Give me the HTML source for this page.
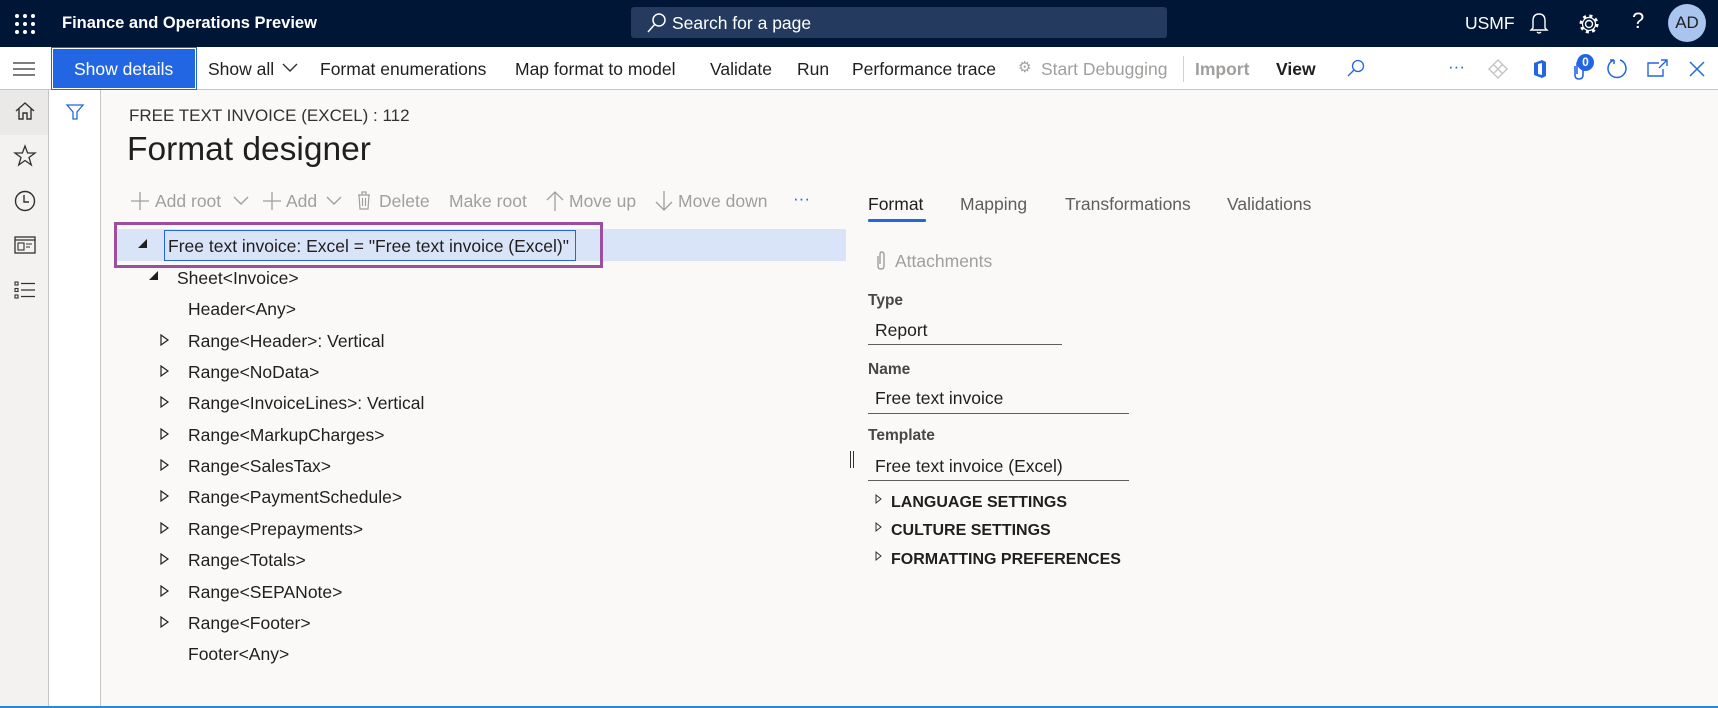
<!DOCTYPE html>
<html><head><meta charset="utf-8"><style>
*{margin:0;padding:0;box-sizing:border-box}
body{width:1718px;height:708px;overflow:hidden;background:#faf9f8;font-family:"Liberation Sans",sans-serif;color:#201f1e;position:relative}
.a{position:absolute;white-space:nowrap;line-height:22px}
svg{position:absolute;overflow:visible}
.g{color:#a19f9d}
.f{font-size:17.5px}
</style></head><body>
<div style="position:absolute;left:0;top:0;width:1718px;height:47px;background:#001636"></div>
<svg style="left:14px;top:13px" width="22" height="22"><g fill="#fff"><circle cx="3" cy="3" r="2"/><circle cx="11" cy="3" r="2"/><circle cx="19" cy="3" r="2"/><circle cx="3" cy="11" r="2"/><circle cx="11" cy="11" r="2"/><circle cx="19" cy="11" r="2"/><circle cx="3" cy="19" r="2"/><circle cx="11" cy="19" r="2"/><circle cx="19" cy="19" r="2"/></g></svg>
<div class="a" style="left:62px;top:12px;color:#fff;font-weight:bold;font-size:16.5px">Finance and Operations Preview</div>
<div style="position:absolute;left:631px;top:7px;width:536px;height:31px;background:#243a5e;border-radius:3px"></div>
<svg style="left:647px;top:13px" width="20" height="20"><circle cx="12" cy="7" r="6" fill="none" stroke="#fff" stroke-width="1.5"/><path d="M8 11 L1 19" stroke="#fff" stroke-width="1.5"/></svg>
<div class="a" style="left:672px;top:12px;color:#fff;font-size:17.5px">Search for a page</div>
<div class="a" style="left:1465px;top:12px;color:#fff;font-size:17.5px">USMF</div>
<svg style="left:1530px;top:13px" width="20" height="22"><path d="M3 15 L3 8 Q3 1 9 1 Q15 1 15 8 L15 15 L17 17 L1 17 Z M7 19 Q9 21 11 19" fill="none" stroke="#fff" stroke-width="1.4"/></svg>
<svg style="left:1577px;top:12px" width="24" height="24"><circle cx="12" cy="12" r="3.5" fill="none" stroke="#fff" stroke-width="1.4"/><circle cx="12" cy="12" r="8" fill="none" stroke="#fff" stroke-width="3" stroke-dasharray="3 3.3"/><circle cx="12" cy="12" r="6.5" fill="none" stroke="#fff" stroke-width="1.2"/></svg>
<div class="a" style="left:1632px;top:10px;color:#fff;font-size:22px">?</div>
<div style="position:absolute;left:1668px;top:4px;width:38px;height:38px;border-radius:50%;background:#a9c4ee;color:#201f1e;font-size:17px;text-align:center;line-height:38px">AD</div>
<div style="position:absolute;left:0;top:47px;width:1718px;height:43px;background:#fff;border-bottom:1px solid #c8c6c4"></div>
<svg style="left:13px;top:62px" width="22" height="14"><path d="M0 1H22M0 7H22M0 13H22" stroke="#323130" stroke-width="1.3"/></svg>
<div style="position:absolute;left:52px;top:48px;width:144px;height:41px;background:#2266e3;border:1px solid #fff;outline:1px solid #2266e3"></div>
<div class="a f" style="left:74px;top:58px;color:#fff">Show details</div>
<div class="a f" style="left:208px;top:58px">Show all</div>
<svg style="left:282px;top:63px" width="16" height="10"><path d="M1 1L8 8L15 1" fill="none" stroke="#323130" stroke-width="1.4"/></svg>
<div class="a f" style="left:320px;top:58px">Format enumerations</div>
<div class="a f" style="left:515px;top:58px">Map format to model</div>
<div class="a f" style="left:710px;top:58px">Validate</div>
<div class="a f" style="left:797px;top:58px">Run</div>
<div class="a f" style="left:852px;top:58px">Performance trace</div>
<div class="a g" style="left:1018px;top:57px;font-size:15px">⚙</div>
<div class="a g f" style="left:1041px;top:58px">Start Debugging</div>
<div style="position:absolute;left:1183px;top:56px;width:1px;height:26px;background:#d2d0ce"></div>
<div class="a g f" style="left:1195px;top:58px;font-weight:bold">Import</div>
<div class="a f" style="left:1276px;top:58px;font-weight:bold">View</div>
<svg style="left:1347px;top:59px" width="18" height="18"><circle cx="11" cy="7" r="5.5" fill="none" stroke="#2266e3" stroke-width="1.3"/><path d="M7 11L1 17" stroke="#2266e3" stroke-width="1.3"/></svg>
<div class="a" style="left:1448px;top:56px;font-size:17px;color:#2266e3">···</div>
<svg style="left:1488px;top:59px" width="20" height="20"><path d="M10 1L19 10L10 19L1 10Z M5.5 5.5L14.5 14.5M14.5 5.5L5.5 14.5" fill="none" stroke="#c8c6c4" stroke-width="1.5"/></svg>
<svg style="left:1532px;top:59px" width="16" height="20"><path d="M2 4L10 1L14 3L14 17L10 19L2 16Z" fill="#2266e3"/><path d="M6 5L10 4L10 16L6 15Z" fill="#fff"/></svg>
<svg style="left:1572px;top:60px" width="14" height="20"><path d="M3 6 L3 15 Q3 19 7 19 Q11 19 11 15 L11 4 Q11 1 8 1 Q5 1 5 4 L5 14" fill="none" stroke="#2266e3" stroke-width="1.6"/></svg>
<div style="position:absolute;left:1577px;top:54px;width:17px;height:17px;border-radius:50%;background:#2266e3;color:#fff;font-size:12px;text-align:center;line-height:17px;font-weight:bold">0</div>
<svg style="left:1607px;top:58px" width="22" height="22"><path d="M7 2 A9 9 0 1 0 13 2" fill="none" stroke="#2266e3" stroke-width="1.5"/><path d="M7 2L3 2M7 2L7 6" stroke="#2266e3" stroke-width="1.5"/></svg>
<svg style="left:1647px;top:59px" width="22" height="18"><path d="M12 4H1V17H16V10M14 1H20V7M20 1L12 9" fill="none" stroke="#2266e3" stroke-width="1.4"/></svg>
<svg style="left:1689px;top:61px" width="16" height="16"><path d="M1 1L15 15M15 1L1 15" stroke="#2266e3" stroke-width="1.5"/></svg>
<div style="position:absolute;left:0;top:90px;width:49px;height:618px;background:#f3f2f1;border-right:1px solid #c8c6c4"></div>
<div style="position:absolute;left:0;top:90px;width:48px;height:45px;background:#eae9e8"></div>
<svg style="left:15px;top:101px" width="20" height="20"><path d="M1 10L10 2L19 10M4 8V18H8V12H12V18H16V8" fill="none" stroke="#323130" stroke-width="1.4"/></svg>
<svg style="left:14px;top:145px" width="22" height="22"><path d="M11 1L13.6 8H21L15 12.5L17.3 20L11 15.5L4.7 20L7 12.5L1 8H8.4Z" fill="none" stroke="#323130" stroke-width="1.3"/></svg>
<svg style="left:14px;top:190px" width="22" height="22"><circle cx="11" cy="11" r="9.5" fill="none" stroke="#323130" stroke-width="1.4"/><path d="M10 5V12H15" fill="none" stroke="#323130" stroke-width="1.4"/></svg>
<svg style="left:14px;top:236px" width="22" height="18"><rect x="1" y="1" width="20" height="16" fill="none" stroke="#323130" stroke-width="1.3"/><path d="M1 4H21" stroke="#323130" stroke-width="1.3"/><rect x="4" y="7" width="6" height="7" fill="none" stroke="#323130" stroke-width="1.1"/><path d="M12 8H18M12 11H16" stroke="#323130"/></svg>
<svg style="left:14px;top:281px" width="22" height="18"><g fill="none" stroke="#323130" stroke-width="1.1"><rect x="1" y="1" width="3" height="3"/><rect x="1" y="7.5" width="3" height="3"/><rect x="1" y="14" width="3" height="3"/></g><path d="M7 2.5H21M7 9H21M7 15.5H21" stroke="#323130" stroke-width="1.2"/></svg>
<div style="position:absolute;left:49px;top:90px;width:52px;height:618px;background:#fff;border-right:1px solid #c8c6c4"></div>
<svg style="left:66px;top:104px" width="18" height="16"><path d="M1 1H17L11 8V15H7V8Z" fill="none" stroke="#2266e3" stroke-width="1.3"/></svg>
<div style="position:absolute;left:0;top:706px;width:1718px;height:2px;background:#2b88d8"></div>
<div class="a" style="left:129px;top:105px;font-size:17px;color:#323130">FREE TEXT INVOICE (EXCEL) : 112</div>
<div class="a" style="left:127px;top:130px;font-size:33.5px;line-height:40px">Format designer</div>
<svg style="left:131px;top:192px" width="18" height="18"><path d="M9 0V18M0 9H18" stroke="#a19f9d" stroke-width="1.3"/></svg>
<div class="a g f" style="left:155px;top:190px">Add root</div>
<svg style="left:233px;top:196px" width="16" height="10"><path d="M1 1L8 8L15 1" fill="none" stroke="#a19f9d" stroke-width="1.4"/></svg>
<svg style="left:263px;top:192px" width="18" height="18"><path d="M9 0V18M0 9H18" stroke="#a19f9d" stroke-width="1.3"/></svg>
<div class="a g f" style="left:286px;top:190px">Add</div>
<svg style="left:326px;top:196px" width="16" height="10"><path d="M1 1L8 8L15 1" fill="none" stroke="#a19f9d" stroke-width="1.4"/></svg>
<svg style="left:357px;top:191px" width="14" height="19"><path d="M1 4H13M5 4V1H9V4M2 4L3 18H11L12 4M5.5 7V15M8.5 7V15" fill="none" stroke="#a19f9d" stroke-width="1.2"/></svg>
<div class="a g f" style="left:379px;top:190px">Delete</div>
<div class="a g f" style="left:449px;top:190px">Make root</div>
<svg style="left:546px;top:191px" width="18" height="20"><path d="M9 20V1M1 9L9 1L17 9" fill="none" stroke="#a19f9d" stroke-width="1.3"/></svg>
<div class="a g f" style="left:569px;top:190px">Move up</div>
<svg style="left:655px;top:191px" width="18" height="20"><path d="M9 0V19M1 11L9 19L17 11" fill="none" stroke="#a19f9d" stroke-width="1.3"/></svg>
<div class="a g f" style="left:678px;top:190px">Move down</div>
<div class="a" style="left:793px;top:188px;font-size:17px;color:#2266e3">···</div>
<div style="position:absolute;left:117px;top:229px;width:729px;height:32px;background:#dae4f8"></div>
<div style="position:absolute;left:114px;top:222px;width:489px;height:46px;border:3px solid #9b4f9e"></div>
<div style="position:absolute;left:164px;top:230px;width:412px;height:31px;border:1px solid #2266e3"></div>
<svg style="left:138px;top:239px" width="10" height="10"><path d="M9 0V9H0Z" fill="#201f1e"/></svg>
<div class="a f" style="left:168px;top:235px">Free text invoice: Excel = "Free text invoice (Excel)"</div>
<svg style="left:149px;top:271px" width="10" height="10"><path d="M9 0V9H0Z" fill="#201f1e"/></svg>
<div class="a f" style="left:177px;top:267px">Sheet&lt;Invoice&gt;</div>
<div class="a f" style="left:188px;top:298px">Header&lt;Any&gt;</div>
<div class="a f" style="left:188px;top:330px">Range&lt;Header&gt;: Vertical</div>
<div class="a f" style="left:188px;top:361px">Range&lt;NoData&gt;</div>
<div class="a f" style="left:188px;top:392px">Range&lt;InvoiceLines&gt;: Vertical</div>
<div class="a f" style="left:188px;top:424px">Range&lt;MarkupCharges&gt;</div>
<div class="a f" style="left:188px;top:455px">Range&lt;SalesTax&gt;</div>
<div class="a f" style="left:188px;top:486px">Range&lt;PaymentSchedule&gt;</div>
<div class="a f" style="left:188px;top:518px">Range&lt;Prepayments&gt;</div>
<div class="a f" style="left:188px;top:549px">Range&lt;Totals&gt;</div>
<div class="a f" style="left:188px;top:581px">Range&lt;SEPANote&gt;</div>
<div class="a f" style="left:188px;top:612px">Range&lt;Footer&gt;</div>
<div class="a f" style="left:188px;top:643px">Footer&lt;Any&gt;</div>
<svg style="left:160px;top:334px" width="10" height="300"><g fill="none" stroke="#201f1e" stroke-width="1.2"><path d="M1 1L8 6L1 11Z"/><path d="M1 32L8 37L1 42Z"/><path d="M1 63L8 68L1 73Z"/><path d="M1 95L8 100L1 105Z"/><path d="M1 126L8 131L1 136Z"/><path d="M1 157L8 162L1 167Z"/><path d="M1 189L8 194L1 199Z"/><path d="M1 220L8 225L1 230Z"/><path d="M1 252L8 257L1 262Z"/><path d="M1 283L8 288L1 293Z"/></g></svg>
<div class="a f" style="left:868px;top:193px">Format</div>
<div style="position:absolute;left:868px;top:219px;width:58px;height:3px;background:#2266e3;border-radius:1px"></div>
<div class="a f" style="left:960px;top:193px;color:#605e5c">Mapping</div>
<div class="a f" style="left:1065px;top:193px;color:#605e5c">Transformations</div>
<div class="a f" style="left:1227px;top:193px;color:#605e5c">Validations</div>
<svg style="left:876px;top:251px" width="10" height="20"><path d="M2 5V15Q2 18 5 18Q8 18 8 15V4Q8 1 5.5 1Q4 1 4 4V13" fill="none" stroke="#a19f9d" stroke-width="1.4"/></svg>
<div class="a g f" style="left:895px;top:250px">Attachments</div>
<div class="a" style="left:868px;top:290px;font-size:15.5px;font-weight:bold;color:#494746">Type</div>
<div class="a f" style="left:875px;top:319px">Report</div>
<div style="position:absolute;left:868px;top:344px;width:194px;height:1px;background:#605e5c"></div>
<div class="a" style="left:868px;top:359px;font-size:15.5px;font-weight:bold;color:#494746">Name</div>
<div class="a f" style="left:875px;top:387px">Free text invoice</div>
<div style="position:absolute;left:868px;top:413px;width:261px;height:1px;background:#605e5c"></div>
<div class="a" style="left:868px;top:425px;font-size:15.5px;font-weight:bold;color:#494746">Template</div>
<div class="a f" style="left:875px;top:455px">Free text invoice (Excel)</div>
<div style="position:absolute;left:868px;top:480px;width:261px;height:1px;background:#605e5c"></div>
<div style="position:absolute;left:850px;top:451px;width:1px;height:17px;background:#323130;box-shadow:3px 0 0 #323130"></div>
<svg style="left:875px;top:494px" width="8" height="70"><g fill="none" stroke="#323130" stroke-width="1"><path d="M1 1L6 5L1 9Z"/><path d="M1 29L6 33L1 37Z"/><path d="M1 58L6 62L1 66Z"/></g></svg>
<div class="a" style="left:891px;top:492px;font-size:16px;font-weight:bold">LANGUAGE SETTINGS</div>
<div class="a" style="left:891px;top:520px;font-size:16px;font-weight:bold">CULTURE SETTINGS</div>
<div class="a" style="left:891px;top:549px;font-size:16px;font-weight:bold">FORMATTING PREFERENCES</div>
</body></html>
